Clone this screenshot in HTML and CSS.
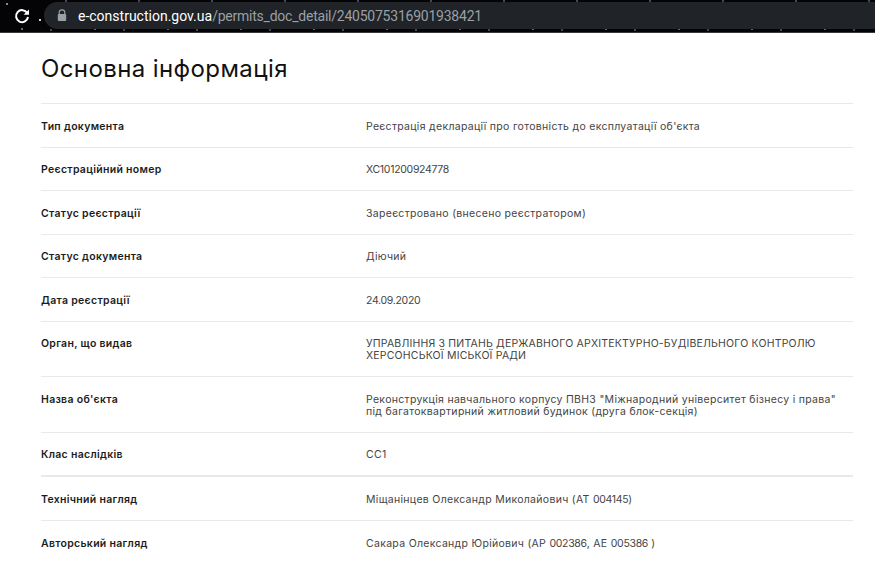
FILE: index.html
```html
<!DOCTYPE html>
<html lang="uk">
<head>
<meta charset="utf-8">
<title>Основна інформація</title>
<link rel="stylesheet" href="styles.css">
</head>
<body>
<header class="toolbar">
  <svg class="reload" width="16" height="16" viewBox="0 0 16 16" aria-hidden="true"><path d="M13.2 5A6 6 0 1 0 14 9" fill="none" stroke="#fff" stroke-width="2"/><path d="M15 1.4v5.4H9.6z" fill="#fff"/></svg>
  <div class="omnibox">
    <svg class="lock" width="10" height="13" viewBox="0 0 10 13" aria-hidden="true"><path d="M2.2 5V3.6a2.8 2.8 0 0 1 5.6 0V5" fill="none" stroke="#9aa0a6" stroke-width="1.2"/><rect x="0.8" y="5" width="8.4" height="7" rx="1" fill="#9aa0a6"/></svg>
    <span class="url"><span class="host">e-construction.gov.ua</span><span class="path">/permits_doc_detail/2405075316901938421</span></span>
  </div>
</header>
<main class="page">
  <h1 class="title">Основна інформація</h1>
  <div class="row"><div class="label">Тип документа</div><div class="value">Реєстрація декларації про готовність до експлуатації об'єкта</div></div>
  <div class="row"><div class="label">Реєстраційний номер</div><div class="value"><span class="num">ХС101200924778</span></div></div>
  <div class="row"><div class="label">Статус реєстрації</div><div class="value">Зареєстровано (внесено реєстратором)</div></div>
  <div class="row"><div class="label">Статус документа</div><div class="value">Діючий</div></div>
  <div class="row"><div class="label">Дата реєстрації</div><div class="value"><span class="num">24.09.2020</span></div></div>
  <div class="row"><div class="label">Орган, що видав</div><div class="value caps">УПРАВЛІННЯ З ПИТАНЬ ДЕРЖАВНОГО АРХІТЕКТУРНО-БУДІВЕЛЬНОГО КОНТРОЛЮ<br>ХЕРСОНСЬКОЇ МІСЬКОЇ РАДИ</div></div>
  <div class="row"><div class="label">Назва об'єкта</div><div class="value">Реконструкція навчального корпусу ПВНЗ "Міжнародний університет бізнесу і права"<br>під багатоквартирний житловий будинок (друга блок-секція)</div></div>
  <div class="row"><div class="label">Клас наслідків</div><div class="value">СС1</div></div>
  <div class="row row-thick"><div class="label">Технічний нагляд</div><div class="value">Міщанінцев Олександр Миколайович (АТ <span class="num">004145</span>)</div></div>
  <div class="row"><div class="label">Авторський нагляд</div><div class="value">Сакара Олександр Юрійович (АР <span class="num">002386</span>, АЕ <span class="num">005386</span> )</div></div>
</main>
</body>
</html>
```
FILE: styles.css
```css
html, body { margin: 0; padding: 0; background: #fff; }
body { font-family: Inter, "Liberation Sans", sans-serif; overflow: hidden; height: 561px; }
.toolbar {
  height: 33px;
  box-sizing: border-box;
  display: flex;
  align-items: flex-start;
  padding: 2px 0 0 14px;
  border-bottom: 1px solid #3a3a3a;
  background-color: #040406;
  background-image:
    radial-gradient(circle at 7px 4px, #b9b9c8 0.6px, transparent 1px),
    radial-gradient(circle at 40px 20px, #d8d8e0 0.7px, transparent 1.1px),
    radial-gradient(circle at 22px 29px, #8a8a98 0.6px, transparent 1px),
    radial-gradient(circle at 51px 30px, #77778a 0.5px, transparent 1px),
    radial-gradient(circle at 66px 1px, #77778a 0.5px, transparent 1px);
  background-size: 73px 33px;
}
.reload { margin-top: 6px; flex: none; }
.omnibox { margin-left: 14px; height: 27px; flex: 1; background: #202328; border-radius: 14px 0 0 14px; display: flex; align-items: center; padding-left: 13px; }
.lock { flex: none; }
.url { margin-left: 11px; font: 14px Roboto, sans-serif; color: #9aa0a6; white-space: nowrap; }
.host { color: #fff; }
.path { letter-spacing: -0.23px; }
.page { padding: 0 22px 0 41px; }
.title { margin: 0; font-size: 24px; font-weight: 400; line-height: 28px; letter-spacing: 0.4px; color: #111; padding: 22px 0 20.4px; }
.row { display: flex; border-top: 1px solid #e6eaec; padding: 16.5px 0 14px; font-size: 10.5px; line-height: 12px; }
.row-thick { border-top-width: 2px; }
.row:last-child { padding-top: 17.5px; }
.label { width: 325px; flex: none; font-weight: 600; color: #1c1c1c; letter-spacing: 0.3px; }
.value { color: #444; letter-spacing: 0.3px; }
.caps { letter-spacing: 0.19px; }
.num { letter-spacing: -0.3px; }
```
